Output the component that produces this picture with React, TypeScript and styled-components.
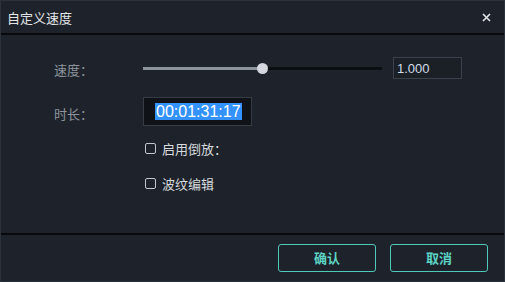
import React from 'react';
import styled, {createGlobalStyle} from 'styled-components';

const GlobalStyle = createGlobalStyle`
  html, body {
    margin: 0;
    padding: 0;
    background: #1e232b;
  }
  * { box-sizing: border-box; }
`;

const cjk = `"Noto Sans CJK SC", "Liberation Sans", sans-serif`;

export const DialogDiv = styled.div`
  width: 505px;
  height: 282px;
  display: flex;
  flex-direction: column;
  background: #1e232b;
  border: 1px solid #2b323c;
  font-family: ${cjk};
  color: #8d939b;
`;

export const TitleBar = styled.div`
  height: 34px;
  flex: none;
  display: flex;
  align-items: center;
  justify-content: space-between;
  padding: 0 11px 0 6px;
  border-bottom: 2px solid #07090b;
`;

export const TitleText = styled.span`
  font-size: 13px;
  color: #e2e4e7;
`;

export const CloseButton = styled.button`
  width: 14px;
  height: 14px;
  padding: 0;
  border: none;
  background: none;
  display: flex;
  align-items: center;
  justify-content: center;
  cursor: pointer;
`;

export const FormBody = styled.div`
  flex: 1;
  display: flex;
  flex-direction: column;
  padding: 22px 0 0 53px;
`;

export const FormRow = styled.div<{$height: number; $gap?: number}>`
  display: flex;
  align-items: center;
  height: ${p => p.$height}px;
  margin-top: ${p => p.$gap ?? 0}px;
`;

export const Label = styled.div<{$shift?: number}>`
  width: 89px;
  flex: none;
  font-size: 13px;
  color: #8d939b;
  padding-top: ${p => p.$shift ?? 0}px;
`;

export const SliderTrack = styled.div`
  position: relative;
  width: 239px;
  height: 3px;
  background: #0c0f12;
`;

export const SliderFill = styled.div`
  height: 100%;
  background: #8c939c;
`;

export const SliderThumb = styled.div`
  position: absolute;
  top: 50%;
  width: 11px;
  height: 11px;
  margin: -5.5px 0 0 -5.5px;
  border-radius: 50%;
  background: #d4d8de;
`;

export const ValueInput = styled.div`
  width: 69px;
  height: 22px;
  margin-left: 11px;
  border: 1px solid #3a414a;
  background: #1b2027;
  color: #d3dde8;
  font-family: "Liberation Sans", Arial, sans-serif;
  font-size: 13px;
  display: flex;
  align-items: center;
  padding-left: 3px;
`;

export const TimeBox = styled.div`
  width: 109px;
  height: 29px;
  border: 1px solid #353c45;
  background: #0f1317;
  display: flex;
  align-items: center;
  padding-left: 11px;
`;

export const Selected = styled.span`
  background: #3392fd;
  color: #ffffff;
  font-family: "Liberation Sans", Arial, sans-serif;
  font-size: 16px;
  line-height: 17px;
  padding: 0 1px;
`;

export const CheckRow = styled.label`
  display: flex;
  align-items: center;
  gap: 6px;
  margin-left: 91px;
  font-size: 13px;
  color: #d6d9dd;
  cursor: pointer;
`;

export const CheckBox = styled.span`
  width: 11px;
  height: 11px;
  border: 1px solid #c3c7cd;
  border-radius: 2px;
  flex: none;
`;

export const Footer = styled.div`
  height: 48px;
  flex: none;
  border-top: 2px solid #07090b;
  display: flex;
  justify-content: flex-end;
  align-items: center;
  gap: 14px;
  padding: 0 16px 1px 0;
`;

export const ActionButton = styled.button`
  width: 98px;
  height: 28px;
  border: 1px solid #4fc9b8;
  border-radius: 3px;
  background: transparent;
  color: #5cd3c3;
  font-family: ${cjk};
  font-size: 13px;
  font-weight: 700;
  cursor: pointer;
`;

const App = () => {
    const speedPercent = 50;

    return (
        <>
            <GlobalStyle/>
            <DialogDiv>
                <TitleBar>
                    <TitleText>自定义速度</TitleText>
                    <CloseButton aria-label="close">
                        <svg width="9" height="9" viewBox="0 0 9 9">
                            <path d="M1 1L8 8M8 1L1 8" stroke="#e4e6e9" strokeWidth="1.6"/>
                        </svg>
                    </CloseButton>
                </TitleBar>
                <FormBody>
                    <FormRow $height={22}>
                        <Label $shift={3}>速度：</Label>
                        <SliderTrack>
                            <SliderFill style={{width: `${speedPercent}%`}}/>
                            <SliderThumb style={{left: `${speedPercent}%`}}/>
                        </SliderTrack>
                        <ValueInput>1.000</ValueInput>
                    </FormRow>
                    <FormRow $height={29} $gap={18}>
                        <Label $shift={4}>时长：</Label>
                        <TimeBox>
                            <Selected>00:01:31:17</Selected>
                        </TimeBox>
                    </FormRow>
                    <FormRow $height={22} $gap={11}>
                        <CheckRow><CheckBox/>启用倒放：</CheckRow>
                    </FormRow>
                    <FormRow $height={22} $gap={13}>
                        <CheckRow><CheckBox/>波纹编辑</CheckRow>
                    </FormRow>
                </FormBody>
                <Footer>
                    <ActionButton>确认</ActionButton>
                    <ActionButton>取消</ActionButton>
                </Footer>
            </DialogDiv>
        </>
    );
};

export default App;
